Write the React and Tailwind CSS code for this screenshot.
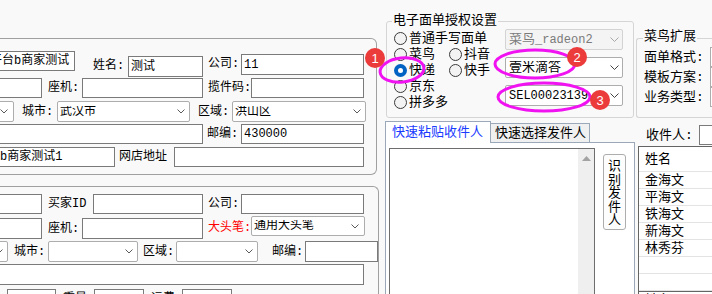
import React from 'react';

const Chevron = () => (
  <svg width="8" height="5" viewBox="0 0 8 5" className="shrink-0">
    <path d="M0.5 0.5 L4 4 L7.5 0.5" fill="none" stroke="#5a5a5a" strokeWidth="1" />
  </svg>
);

const Box = ({ className = '', children }) => (
  <div className={`shrink-0 border border-[#7a7a7a] bg-white flex items-center pl-[2px] overflow-hidden whitespace-nowrap text-[12px] leading-none ${className}`}>
    {children}
  </div>
);

const Combo = ({ className = '', children }) => (
  <div className={`shrink-0 border border-[#adadad] rounded-[2px] bg-white flex items-center pl-[2px] overflow-hidden text-[12px] leading-none ${className}`}>
    <span className="flex-1 whitespace-nowrap overflow-hidden">{children}</span>
    <Chevron />
  </div>
);

const Lbl = ({ className = '', children }) => (
  <div className={`shrink-0 flex items-center whitespace-nowrap text-[12px] leading-none ${className}`}>{children}</div>
);

const Radio = ({ checked, label, className = '' }) => (
  <div className={`flex items-center h-[16px] ${className}`}>
    {checked ? (
      <div className="w-[13px] h-[13px] rounded-full bg-[#0063c4] flex items-center justify-center shrink-0">
        <div className="w-[5px] h-[5px] rounded-full bg-white" />
      </div>
    ) : (
      <div className="w-[13px] h-[13px] rounded-full border border-[#3a3a3a] bg-[#f3f3f3] shrink-0" />
    )}
    <span className="ml-[2px] text-[13px] leading-none whitespace-nowrap">{label}</span>
  </div>
);

const receivers = ['金海文', '平海文', '铁海文', '新海文', '林秀芬', '', ''];

export default function App() {
  return (
    <div className="w-[712px] h-[294px] overflow-hidden relative flex bg-[#f9f9f9] text-black font-['Liberation_Mono','Noto_Sans_CJK_SC',monospace]">
      {/* left: address form */}
      <div className="w-[379px] shrink-0 overflow-hidden flex flex-col">
        <div className="h-[38px] shrink-0" />
        <div className="w-[377px] h-[137px] shrink-0 border-y border-r border-[#a0a0a0] rounded-r-[6px] flex flex-col">
          <div className="flex items-start mt-[12px] h-[27px]">
            <Box className="ml-[-13px] w-[88px] h-[20px]">平台b商家测试</Box>
            <Lbl className="ml-[18px] w-[35px] h-[20px] mt-[5px]">姓名:</Lbl>
            <Box className="w-[75px] h-[21px] mt-[5px]">测试</Box>
            <Lbl className="ml-[5px] w-[33px] h-[20px] mt-[3px]">公司:</Lbl>
            <Box className="w-[123px] h-[21px] mt-[3px]">11</Box>
          </div>
          <div className="flex items-start h-[23px]">
            <Box className="ml-[-10px] w-[52px] h-[20px]" />
            <Lbl className="ml-[6px] w-[34px] h-[20px]">座机:</Lbl>
            <Box className="w-[121px] h-[20px]" />
            <Lbl className="ml-[5px] w-[43px] h-[20px]">揽件码:</Lbl>
            <Box className="w-[113px] h-[20px]" />
          </div>
          <div className="flex items-start h-[23px]">
            <Combo className="ml-[-60px] w-[74px] h-[21px] pr-[5px]" />
            <Lbl className="ml-[8px] w-[35px] h-[21px]">城市:</Lbl>
            <Combo className="w-[133px] h-[21px] pr-[4px]">武汉市</Combo>
            <Lbl className="ml-[8px] w-[34px] h-[21px]">区域:</Lbl>
            <Combo className="w-[134px] h-[21px] pr-[4px]">洪山区</Combo>
          </div>
          <div className="flex items-start h-[23px]">
            <Box className="ml-[-10px] w-[213px] h-[20px]" />
            <Lbl className="ml-[4px] w-[34px] h-[20px]">邮编:</Lbl>
            <Box className="w-[123px] h-[20px]">430000</Box>
          </div>
          <div className="flex items-start h-[20px]">
            <Box className="ml-[-27px] w-[142px] h-[20px]">平台b商家测试1</Box>
            <Lbl className="ml-[4px] w-[55px] h-[20px]">网店地址</Lbl>
            <Box className="w-[190px] h-[20px]" />
          </div>
        </div>

        <div className="mt-[11px] w-[379px] h-[140px] shrink-0 border-t border-r border-[#a0a0a0] rounded-tr-[6px] flex flex-col">
          <div className="flex items-start mt-[7px] h-[22px]">
            <Box className="ml-[-10px] w-[52px] h-[20px]" />
            <Lbl className="ml-[6px] w-[45px] h-[20px]">买家ID</Lbl>
            <Box className="w-[110px] h-[20px]" />
            <Lbl className="ml-[5px] w-[33px] h-[20px]">公司:</Lbl>
            <Box className="w-[123px] h-[20px]" />
          </div>
          <div className="flex items-start h-[25px]">
            <Box className="ml-[-10px] w-[52px] h-[21px] mt-[2px]" />
            <Lbl className="ml-[6px] w-[34px] h-[21px] mt-[2px]">座机:</Lbl>
            <Box className="w-[121px] h-[21px] mt-[2px]" />
            <Lbl className="ml-[5px] w-[43px] h-[21px] mt-[1px] text-[#ff0000]">大头笔:</Lbl>
            <Combo className="w-[114px] h-[20px] pr-[5px]">通用大头笔</Combo>
          </div>
          <div className="flex items-start h-[23px]">
            <Combo className="ml-[-60px] w-[68px] h-[21px] pr-[4px]" />
            <Lbl className="ml-[6px] w-[34px] h-[21px]">城市:</Lbl>
            <Combo className="w-[90px] h-[21px] pr-[4px]" />
            <Lbl className="ml-[5px] w-[33px] h-[21px]">区域:</Lbl>
            <Combo className="w-[82px] h-[21px] pr-[4px]" />
            <Lbl className="ml-[14px] w-[33px] h-[21px]">邮编:</Lbl>
            <Box className="w-[73px] h-[21px]" />
          </div>
          <div className="flex items-start h-[25px]">
            <Box className="ml-[-10px] w-[374px] h-[21px]" />
          </div>
          <div className="flex items-start h-[21px]">
            <Box className="ml-[7px] w-[49px] h-[20px]" />
            <Lbl className="ml-[7px] w-[31px] h-[20px]">重量</Lbl>
            <Box className="w-[50px] h-[20px]" />
            <Lbl className="ml-[7px] w-[31px] h-[20px]">运费</Lbl>
            <Box className="w-[50px] h-[20px]" />
          </div>
        </div>
      </div>

      {/* right side */}
      <div className="flex-1 min-w-0 flex flex-col overflow-hidden">
        <div className="flex h-[121px] shrink-0">
          <div className="ml-[7px] mt-[21px] w-[248px] h-[97px] shrink-0 border border-[#d5d5d5] rounded-[3px] relative flex">
            <span className="absolute top-[-9px] left-[5px] px-[1px] bg-[#f9f9f9] text-[13px] leading-[16px]">电子面单授权设置</span>
            <div className="w-[118px] shrink-0 pl-[7px] pt-[8px] grid grid-cols-[55px_1fr] auto-rows-[16px] content-start">
              <Radio label="普通手写面单" className="col-span-2" />
              <Radio label="菜鸟" />
              <Radio label="抖音" />
              <Radio label="快递" checked />
              <Radio label="快手" />
              <Radio label="京东" className="col-span-2" />
              <Radio label="拼多多" className="col-span-2" />
            </div>
            <div className="w-[118px] shrink-0 pt-[7px] flex flex-col gap-[7px]">
              <div className="h-[21px] border border-[#d3d3d3] rounded-[2px] bg-[#f4f4f4] flex items-center pl-[3px] pr-[3px] text-[12px] leading-none text-[#7a7a7a]">
                <span className="flex-1 whitespace-nowrap overflow-hidden"><span className="text-[13px]">菜鸟</span>_radeon2</span>
                <svg width="9" height="5" viewBox="0 0 9 5" className="shrink-0"><path d="M0.5 0.5 L4.5 4.5 L8.5 0.5" fill="none" stroke="#a8a8a8" strokeWidth="1" /></svg>
              </div>
              <div className="h-[21px] border border-[#adadad] rounded-[2px] bg-white flex items-center pl-[3px] pr-[3px] text-[13px] leading-none">
                <span className="flex-1 whitespace-nowrap overflow-hidden">壹米滴答</span>
                <svg width="9" height="5" viewBox="0 0 9 5" className="shrink-0"><path d="M0.5 0.5 L4.5 4.5 L8.5 0.5" fill="none" stroke="#444" strokeWidth="1" /></svg>
              </div>
              <div className="h-[21px] border border-[#adadad] rounded-[2px] bg-white flex items-center pl-[3px] pr-[3px] text-[12px] leading-none">
                <span className="flex-1 whitespace-nowrap overflow-hidden">SEL00023139</span>
                <svg width="9" height="5" viewBox="0 0 9 5" className="shrink-0"><path d="M0.5 0.5 L4.5 4.5 L8.5 0.5" fill="none" stroke="#444" strokeWidth="1" /></svg>
              </div>
            </div>
          </div>

          <div className="ml-[2px] mt-[38px] w-[90px] h-[80px] shrink-0 border-y border-l border-[#d5d5d5] rounded-l-[3px] relative flex flex-col pt-[8px]">
            <span className="absolute top-[-10px] left-[6px] px-[1px] bg-[#f9f9f9] text-[13px] leading-[16px]">菜鸟扩展</span>
            {['面单格式:', '模板方案:', '业务类型:'].map((t) => (
              <div key={t} className="flex h-[20px] items-center">
                <span className="w-[73px] pl-[7px] text-[13px] leading-none whitespace-nowrap shrink-0">{t}</span>
                <div className="h-[20px] w-[20px] border border-[#adadad] bg-white shrink-0" />
              </div>
            ))}
          </div>
        </div>

        <div className="flex flex-1 min-h-0">
          {/* tab control */}
          <div className="ml-[6px] w-[250px] shrink-0 flex flex-col">
            <div className="flex items-end h-[21px] shrink-0">
              <div className="h-[22px] mb-[-1px] w-[106px] border border-b-0 border-[#9aa8ba] bg-white relative z-10 pl-[6px] flex items-center text-[13px] leading-none text-[#1a3cff] whitespace-nowrap">快速粘贴收件人</div>
              <div className="h-[19px] w-[99px] border border-l-0 border-b-0 border-[#9aa8ba] bg-[#f0f0f0] pl-[4px] flex items-center text-[13px] leading-none whitespace-nowrap">快速选择发件人</div>
            </div>
            <div className="flex-1 border border-b-0 border-[#9aa8ba] bg-white flex items-start pl-[3px] pt-[5px] overflow-hidden">
              <div className="w-[206px] h-[200px] shrink-0 border border-[#6e6e6e] bg-white flex justify-end">
                <div className="w-[16px] bg-[#efefef] flex justify-center pt-[7px]">
                  <svg width="9" height="5" viewBox="0 0 9 5"><path d="M0 5 L4.5 0 L9 5 Z" fill="#a3a3a3" /></svg>
                </div>
              </div>
              <div className="ml-[8px] mt-[6px] w-[23px] h-[76px] shrink-0 border border-[#adadad] rounded-[3px] bg-[#fdfdfd] flex flex-col items-center pt-[5px] text-[13px] leading-[13.5px]">
                {['识', '别', '发', '件', '人'].map((c) => (
                  <span key={c}>{c}</span>
                ))}
              </div>
            </div>
          </div>

          {/* receiver list */}
          <div className="flex-1 min-w-0 flex flex-col">
            <div className="mt-[4px] h-[20px] flex items-center shrink-0">
              <span className="ml-[11px] w-[53px] text-[13px] leading-none whitespace-nowrap shrink-0">收件人:</span>
              <div className="w-[30px] h-[20px] border border-[#7a7a7a] bg-white shrink-0" />
            </div>
            <div className="ml-[3px] mt-[1px] flex-1 border-l border-t border-[#646464] bg-white flex flex-col text-[13px] leading-none">
              <div className="h-[25px] shrink-0 border-b border-[#e3e3e3] pl-[6px] flex items-center">姓名</div>
              {receivers.map((n, i) => (
                <div key={i} className="h-[17px] shrink-0 border-b border-[#e3e3e3] pl-[6px] flex items-center whitespace-nowrap">{n}</div>
              ))}
              <div className="border-t border-[#646464] pl-[6px] pt-[2px] shrink-0">姓名</div>
            </div>
          </div>
        </div>
      </div>

      {/* annotation marks drawn over the form */}
      <svg className="absolute inset-0 pointer-events-none" width="712" height="294" viewBox="0 0 712 294">
        <g fill="none" stroke="#f012f0" strokeWidth="3">
          <ellipse cx="402" cy="70" rx="22" ry="12" transform="rotate(-6 402 70)" />
          <ellipse cx="535" cy="64" rx="40" ry="14" />
          <ellipse cx="544" cy="97" rx="46" ry="14" />
        </g>
      </svg>
      <div className="absolute left-[365px] top-[48px] w-[20px] h-[20px] rounded-full bg-[#ec3b3b] text-white flex items-center justify-center text-[13px] leading-none font-['Liberation_Sans',sans-serif]">1</div>
      <div className="absolute left-[567px] top-[47px] w-[20px] h-[20px] rounded-full bg-[#ec3b3b] text-white flex items-center justify-center text-[13px] leading-none font-['Liberation_Sans',sans-serif]">2</div>
      <div className="absolute left-[590px] top-[90px] w-[20px] h-[20px] rounded-full bg-[#ec3b3b] text-white flex items-center justify-center text-[13px] leading-none font-['Liberation_Sans',sans-serif]">3</div>
    </div>
  );
}
